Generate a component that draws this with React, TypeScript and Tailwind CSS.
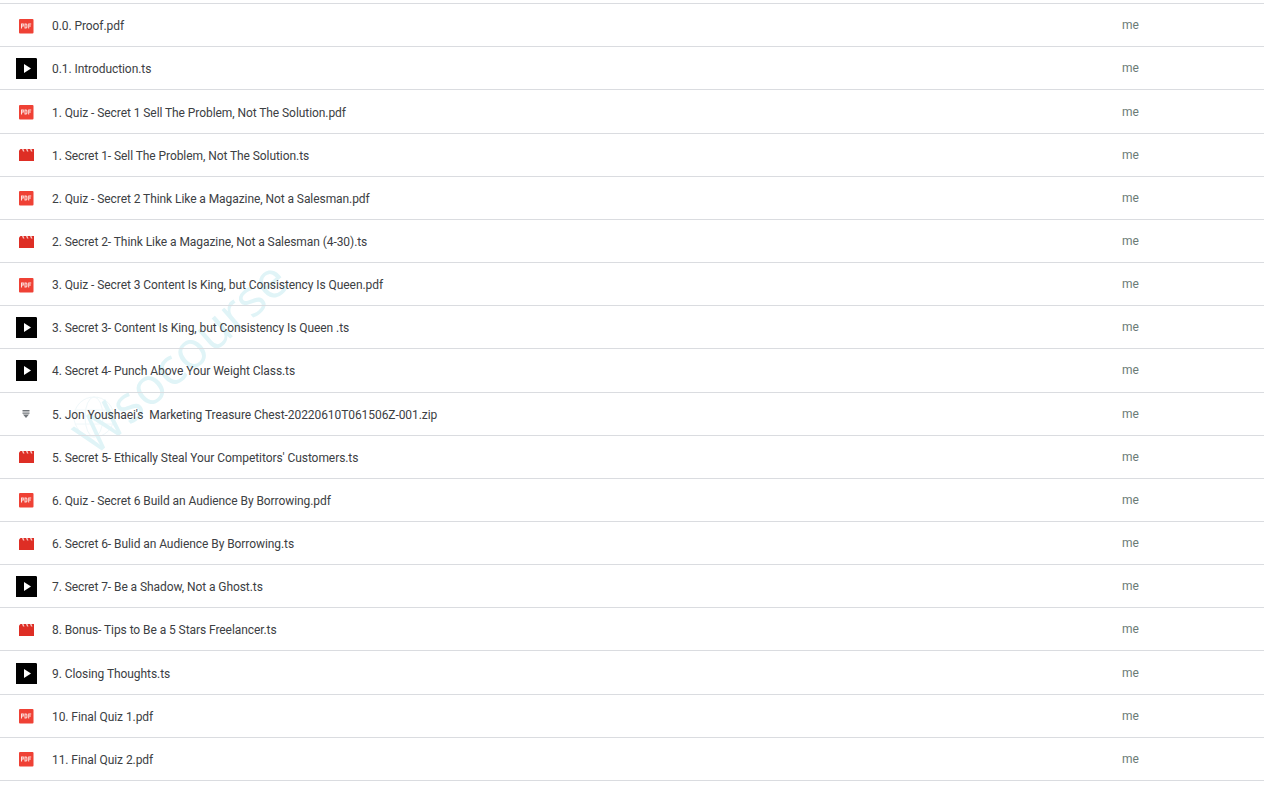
const rows: [string, string][] = [
  ["pdf", "0.0. Proof.pdf"],
  ["play", "0.1. Introduction.ts"],
  ["pdf", "1. Quiz - Secret 1 Sell The Problem, Not The Solution.pdf"],
  ["film", "1. Secret 1- Sell The Problem, Not The Solution.ts"],
  ["pdf", "2. Quiz - Secret 2 Think Like a Magazine, Not a Salesman.pdf"],
  ["film", "2. Secret 2- Think Like a Magazine, Not a Salesman (4-30).ts"],
  ["pdf", "3. Quiz - Secret 3 Content Is King, but Consistency Is Queen.pdf"],
  ["play", "3. Secret 3- Content Is King, but Consistency Is Queen .ts"],
  ["play", "4. Secret 4- Punch Above Your Weight Class.ts"],
  ["zip", "5. Jon Youshaei's  Marketing Treasure Chest-20220610T061506Z-001.zip"],
  ["film", "5. Secret 5- Ethically Steal Your Competitors' Customers.ts"],
  ["pdf", "6. Quiz - Secret 6 Build an Audience By Borrowing.pdf"],
  ["film", "6. Secret 6- Bulid an Audience By Borrowing.ts"],
  ["play", "7. Secret 7- Be a Shadow, Not a Ghost.ts"],
  ["film", "8. Bonus- Tips to Be a 5 Stars Freelancer.ts"],
  ["play", "9. Closing Thoughts.ts"],
  ["pdf", "10. Final Quiz 1.pdf"],
  ["pdf", "11. Final Quiz 2.pdf"],
];

function FileIcon({ kind }: { kind: string }) {
  if (kind === "play")
    return (
      <svg className="ml-[1px]" width="21" height="21" viewBox="0 0 21 21">
        <rect width="21" height="21" fill="#000" />
        <path d="M20 0h1v1z" fill="#bbb" />
        <path d="M8 6v9l7-4.500z" fill="#fff" />
      </svg>
    );
  if (kind === "pdf")
    return (
      <svg width="16" height="16" viewBox="0 0 16 16">
        <rect x="1" y="1" width="14.500" height="14.500" rx="1" fill="#ef4135" />
        <path d="M3 5.500h2.800v3H4.100V10.500H3zM4.100 6.400v1.200h.8V6.400zM6.500 5.500h1.900l1 1v3l-1 1H6.500zM7.500 6.400v3.200h.6l.3-.3V6.700l-.3-.3zM10.200 5.500h3v1h-2v1h1.700v1h-1.700v2h-1z" fill="#fde4e1" />
      </svg>
    );
  if (kind === "film")
    return (
      <svg className="ml-[1px]" width="15" height="12" viewBox="0 0 15 12">
        <path d="M0 1.500L1.500 0H15v12H0z" fill="#de2e25" />
        <path d="M3 0h1.500l1 2.500H4zM7 0h1.500l1 2.500H8zM11 0h1.500l1 2.500H12z" fill="#f7c9c5" />
      </svg>
    );
  return (
    <svg width="8" height="8" viewBox="0 0 8 8">
      <path d="M0.500 0h7v1.500h-7zM0.500 2.500h7v1.200h-7zM1 4.500h6L4 8z" fill="#70757a" />
    </svg>
  );
}

export default function App() {
  return (
    <div className="relative h-[787px] w-[1264px] overflow-hidden bg-white pt-[3.15px] font-['Roboto',sans-serif]">
      <svg className="pointer-events-none absolute left-[72px] top-[395px]" width="44" height="44" viewBox="0 0 44 44" fill="none" stroke="#f0f8fa">
        <circle cx="22" cy="22" r="20" />
        <ellipse cx="22" cy="22" rx="9" ry="20" />
        <path d="M3 15h38M3 29h38" />
      </svg>
      <div className="pointer-events-none absolute left-[49px] top-[331px] origin-center -rotate-[41deg] whitespace-nowrap font-['Open_Sans',sans-serif] text-[51px] leading-none text-[#e0f4f7]">
        Wsocourse
      </div>
      <div className="relative border-t border-[#dadce0]">
        {rows.map(([kind, name], i) => (
          <div key={i} className="flex h-[43.17px] items-center border-b border-[#dadce0]">
            <div className="flex w-[53px] shrink-0 items-center justify-center pr-[1px] pt-[1px]">
              <FileIcon kind={kind} />
            </div>
            <div className="-ml-[1px] min-w-0 flex-1 whitespace-pre pt-[2px] text-xs tracking-[-0.07px] text-[#3c4043]">{name}</div>
            <div className="w-[142px] shrink-0 text-xs text-[#6b7b76]">me</div>
          </div>
        ))}
      </div>
    </div>
  );
}
